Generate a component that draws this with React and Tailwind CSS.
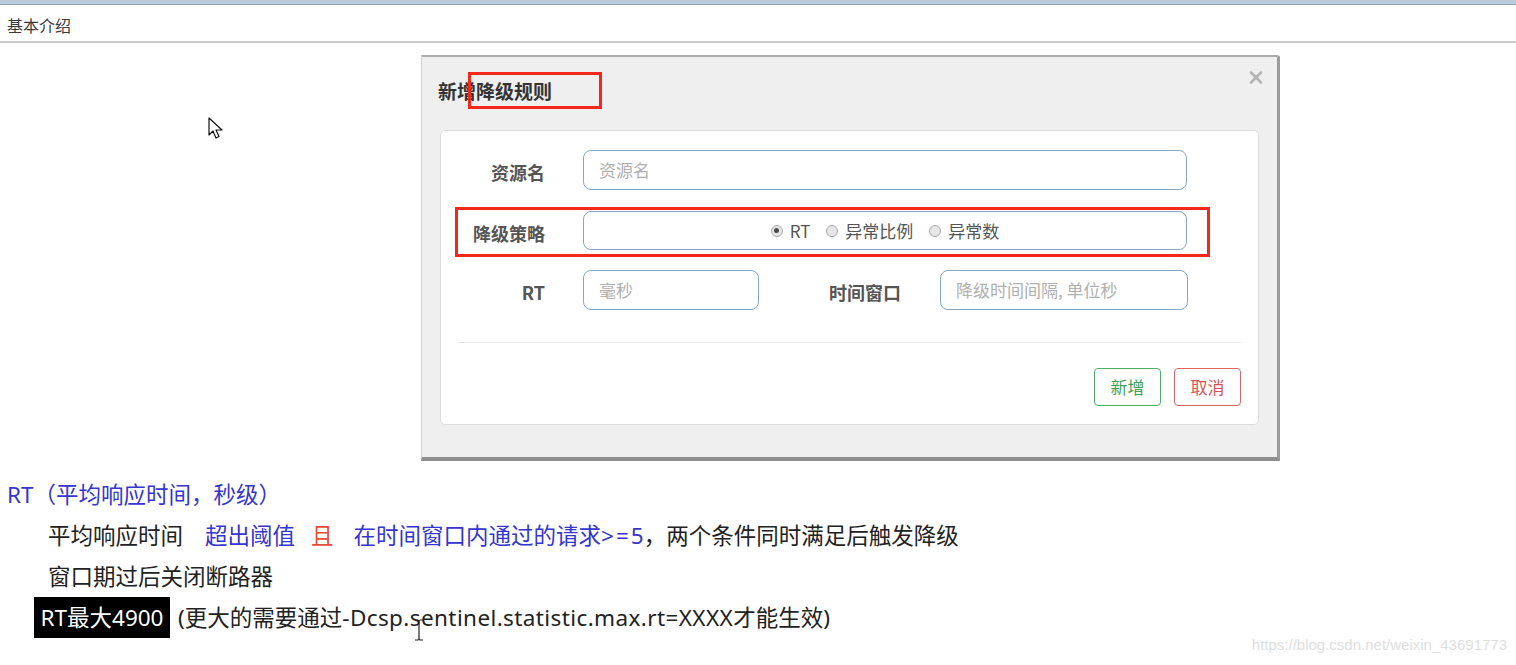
import React from 'react'

const cjk = { fontFamily: '"Noto Sans CJK SC", "Noto Sans", sans-serif' }
const notes = { fontFamily: '"Noto Sans", "Noto Sans CJK SC", sans-serif' }

function Radio({ checked, label }) {
  return (
    <span className="inline-flex items-center">
      <span className="w-[12px] h-[12px] rounded-full border border-[#a9a9a9] bg-[#e6e6e6] flex items-center justify-center">
        {checked && <span className="w-[5px] h-[5px] rounded-full bg-[#4a4a4a]" />}
      </span>
      <span className="ml-[7px] text-[17px] text-[#555]">{label}</span>
    </span>
  )
}

function Field({ placeholder, className = '' }) {
  return (
    <div className={`h-[40px] rounded-[8px] border-[1.5px] border-[#86a6c4] bg-white flex items-center pl-[15px] text-[17px] text-[#b0b0b0] ${className}`}>
      {placeholder}
    </div>
  )
}

function Label({ children, className = '' }) {
  return <div className={`text-right font-bold text-[18px] text-[#555] mt-[5px] ${className}`}>{children}</div>
}

export default function App() {
  return (
    <div className="relative w-[1516px] h-[665px] bg-white overflow-hidden" style={cjk}>
      {/* window top strip */}
      <div className="h-[5px] bg-[#b9cadc] border-b border-[#9aa2ab]" />
      <div className="h-[38px] flex items-center pl-[7px] pt-[4px] text-[16px] text-[#3a3a3a] border-b-2 border-[#cbcbcb]">基本介绍</div>

      {/* modal */}
      <div className="pl-[421px] pt-[12px]">
        <div className="relative w-[859px] h-[406px] bg-[#efefef] border-t-2 border-t-[#ababab] border-l border-l-[#d2d2d2] border-r-[3px] border-r-[#9c9c9c] border-b-[4px] border-b-[#8e8e8e] rounded-tr-[3px]">
          <div className="h-[73px] flex items-center pb-[4px] pl-[16px] font-bold text-[19px] text-[#333]">新增降级规则</div>
          <div className="absolute left-[46px] top-[15px] w-[134px] h-[37px] border-[3px] border-[#f3271a]" />
          <svg className="absolute right-[14px] top-[14px]" width="14" height="13" viewBox="0 0 14 13">
            <path d="M2 1.5 L12 11.5 M12 1.5 L2 11.5" stroke="#b4b4b4" strokeWidth="2.6" strokeLinecap="round" />
          </svg>

          <div className="mx-[18px] h-[295px] bg-white border border-[#dcdcdc] rounded-[5px] pt-[19px]">
            <div className="flex items-center">
              <Label className="w-[104px]">资源名</Label>
              <Field placeholder="资源名" className="ml-[38px] w-[604px]" />
            </div>

            <div className="relative flex items-center mt-[21px]">
              <div className="absolute left-[14px] -top-[4px] w-[755px] h-[50px] border-[3px] border-[#f3271a]" />
              <Label className="w-[104px]">降级策略</Label>
              <div className="ml-[38px] w-[604px] h-[39px] rounded-[8px] border-[1.5px] border-[#86a6c4] flex items-center justify-center gap-[16px]">
                <Radio checked label="RT" />
                <Radio label="异常比例" />
                <Radio label="异常数" />
              </div>
            </div>

            <div className="flex items-center mt-[20px]">
              <Label className="w-[104px]">RT</Label>
              <Field placeholder="毫秒" className="ml-[38px] w-[176px]" />
              <Label className="w-[142px]">时间窗口</Label>
              <Field placeholder="降级时间间隔, 单位秒" className="ml-[39px] w-[248px]" />
            </div>

            <div className="mx-[17px] mt-[32px] h-px bg-[#e6e6e6]" />

            <div className="flex justify-end gap-[13px] mt-[25px] pr-[17px]">
              <button className="w-[67px] h-[38px] rounded-[4px] border border-[#4fae66] text-[#3f9f58] text-[17px] bg-white">新增</button>
              <button className="w-[67px] h-[38px] rounded-[4px] border border-[#de6464] text-[#dc5252] text-[17px] bg-white">取消</button>
            </div>
          </div>
        </div>
      </div>

      {/* notes */}
      <div className="pt-[13px] text-[22.5px] leading-[41px] text-[#222]" style={notes}>
        <div className="pl-[7px] text-[#3535d0]">RT（平均响应时间，秒级）</div>
        <div className="pl-[48px] flex">
          <span>平均响应时间</span>
          <span className="ml-[22px] text-[#3535d0]">超出阈值</span>
          <span className="ml-[16px] text-[#e84c35]">且</span>
          <span className="ml-[20px] text-[#3535d0]">在时间窗口内通过的请求<span className="tracking-[2px]">&gt;=</span>5</span>
          <span>，两个条件同时满足后触发降级</span>
        </div>
        <div className="pl-[48px]">窗口期过后关闭断路器</div>
        <div className="pl-[34px] flex items-center">
          <span className="w-[136px] h-[41px] bg-black text-white flex items-center justify-center">RT最大4900</span>
          <span className="ml-[8px]">(更大的需要通过<span className="tracking-[0.4px]">-Dcsp.sentinel.statistic.max.rt=XXXX</span>才能生效)</span>
        </div>
      </div>

      {/* cursors */}
      <svg className="absolute left-[208px] top-[117px]" width="16" height="24" viewBox="0 0 16 24">
        <path d="M1 1 L1 18 L5 14 L8 21 L11 19.5 L8 13 L14 13 Z" fill="#fff" stroke="#111" strokeWidth="1.2" strokeLinejoin="round" />
      </svg>
      <svg className="absolute left-[414px] top-[619px]" width="10" height="22" viewBox="0 0 10 22">
        <path d="M1 1 H4 Q5 1 5 3 V19 Q5 21 4 21 H1 M9 1 H6 Q5 1 5 3 M5 19 Q5 21 6 21 H9" fill="none" stroke="#222" strokeWidth="1.2" />
      </svg>

      <div className="absolute right-[9px] bottom-[9px] text-[15px] text-[#dedede]" style={{ fontFamily: '"Liberation Sans", Arial, sans-serif' }}>
        https://blog.csdn.net/weixin_43691773
      </div>
    </div>
  )
}
